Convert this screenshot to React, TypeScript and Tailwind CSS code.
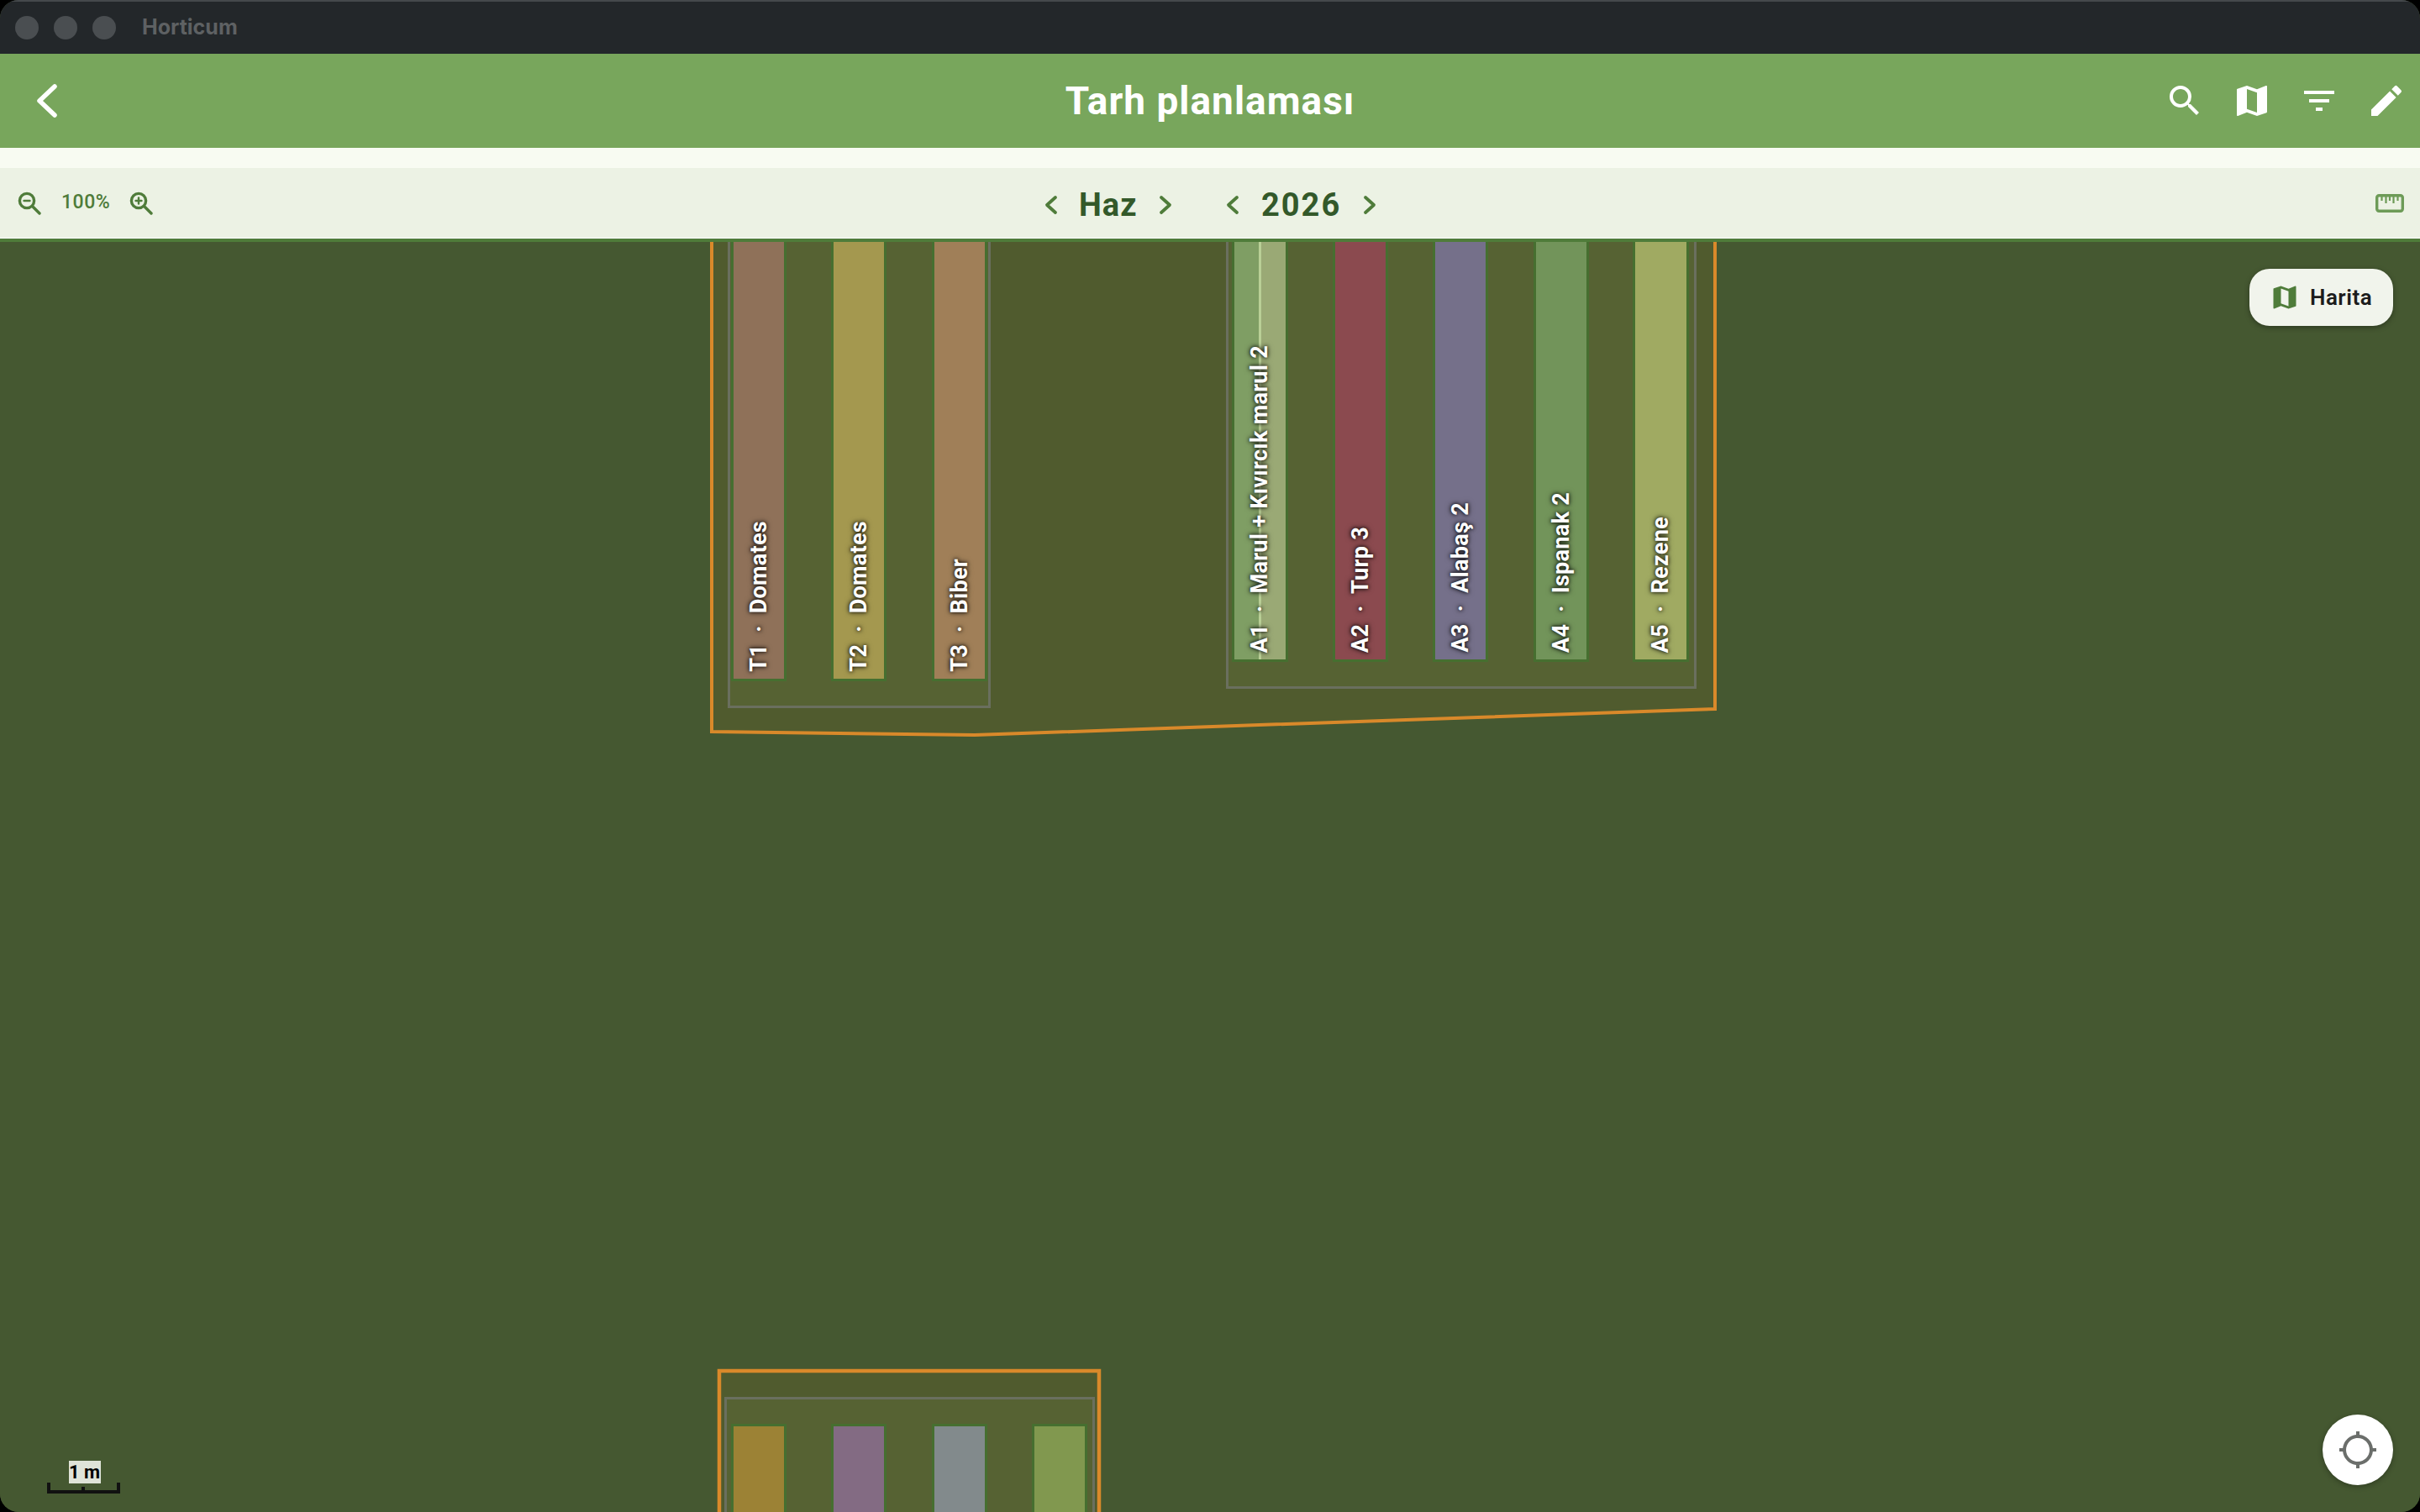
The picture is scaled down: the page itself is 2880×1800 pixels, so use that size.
import React from "react";
import { MdSearch, MdMap, MdFilterList, MdEdit, MdLocationSearching } from "react-icons/md";

const Chevron = ({ dir }: { dir: "l" | "r" }) => (
  <svg viewBox="0 0 16 24" className="w-[16px] h-[24px] text-[#4f7c3a]" fill="none" stroke="currentColor" strokeWidth="3.8" strokeLinecap="round" strokeLinejoin="round">
    <polyline points={dir === "l" ? "13,3 3,12 13,21" : "3,3 13,12 3,21"} />
  </svg>
);

const Zoom = ({ plus }: { plus?: boolean }) => (
  <svg viewBox="0 0 28 28" className="w-[28px] h-[28px] shrink-0" fill="none" stroke="currentColor" strokeWidth="3.4" strokeLinecap="round">
    <circle cx="11" cy="11" r="8.6" />
    <line x1="17.5" y1="17.5" x2="26" y2="26" />
    <line x1="7.5" y1="11" x2="14.5" y2="11" strokeWidth="2.4" />
    {plus && <line x1="11" y1="7.5" x2="11" y2="14.5" strokeWidth="2.4" />}
  </svg>
);

const Ruler = () => (
  <svg viewBox="0 0 34 22" className="w-[34px] h-[22px] text-[#6d9b57]" fill="none" stroke="currentColor">
    <rect x="1.7" y="1.7" width="30.6" height="18.6" rx="2.5" strokeWidth="3.4" />
    <path d="M7.5 3v5M12.5 3v8M17 3v5M21.5 3v8M26.5 3v5" strokeWidth="2.2" />
  </svg>
);

const topBeds = [
  { c: "left-[870px] w-[66px] h-[533px] bg-[#8f7159]", t: "T1  ·  Domates" },
  { c: "left-[989px] w-[66px] h-[533px] bg-[#a4984f]", t: "T2  ·  Domates" },
  { c: "left-[1109px] w-[66px] h-[533px] bg-[#a07f58]", t: "T3  ·  Biber" },
  { c: "left-[1466px] w-[67px] h-[510px] bg-[linear-gradient(90deg,#7f9e64_0%,#7f9e64_48%,#b9cf96_48%,#b9cf96_53%,#9aa975_53%,#9aa975_100%)]", t: "A1  ·  Marul + Kıvırcık marul 2" },
  { c: "left-[1586px] w-[66px] h-[510px] bg-[#8b4a4f]", t: "A2  ·  Turp 3" },
  { c: "left-[1705px] w-[66px] h-[510px] bg-[#75708a]", t: "A3  ·  Alabaş 2" },
  { c: "left-[1825px] w-[66px] h-[510px] bg-[#72945a]", t: "A4  ·  Ispanak 2" },
  { c: "left-[1943px] w-[67px] h-[510px] bg-[#a0aa62]", t: "A5  ·  Rezene" },
];

const bottomBeds = [
  "left-[870px] bg-[#9c8235]",
  "left-[989px] bg-[#836b83]",
  "left-[1109px] bg-[#828a8c]",
  "left-[1228px] bg-[#81984f]",
];

export default function App() {
  return (
    <div className="w-[2880px] h-[1800px] bg-black overflow-hidden font-['Roboto',sans-serif]">
      <div className="w-full h-full rounded-[22px] overflow-hidden flex flex-col bg-[#455831]">
        <div className="h-[64px] shrink-0 bg-[#23272a] border-t-2 border-[#45494c] flex items-center pl-[18px] font-['Inter',sans-serif]">
          <div className="flex gap-[18px]">
            <span className="w-[28px] h-[28px] rounded-full bg-[#4a4e51]" />
            <span className="w-[28px] h-[28px] rounded-full bg-[#4a4e51]" />
            <span className="w-[28px] h-[28px] rounded-full bg-[#4a4e51]" />
          </div>
          <span className="ml-[31px] text-[25px] font-bold text-[#5e6163]">Horticum</span>
        </div>

        <div className="h-[112px] shrink-0 bg-[#78a65c] flex items-center justify-between relative pl-[44px] pr-[16px]">
          <svg viewBox="0 0 24 40" className="w-[24px] h-[40px] text-white" fill="none" stroke="currentColor" strokeWidth="5.5" strokeLinecap="round" strokeLinejoin="round">
            <polyline points="21,3 3,20 21,37" />
          </svg>
          <span className="absolute left-0 right-0 text-center text-[46px] font-bold text-white tracking-[1px]">Tarh planlaması</span>
          <div className="flex items-center gap-[32px] text-white">
            <MdSearch size={48} />
            <MdMap size={48} />
            <MdFilterList size={48} />
            <MdEdit size={48} />
          </div>
        </div>

        <div className="h-[24px] shrink-0 bg-[#f8fbf2]" />

        <div className="h-[83px] shrink-0 bg-[#ecf2e4] flex items-center justify-between relative pl-[21px] pr-[19px]">
          <div className="flex items-center text-[#4f7c3a]">
            <Zoom />
            <span className="ml-[24px] text-[23px] font-medium tracking-[0.5px]">100%</span>
            <span className="ml-[23px]"><Zoom plus /></span>
          </div>
          <div className="absolute left-[1243px] top-[25px] flex items-center">
            <Chevron dir="l" />
            <span className="ml-[25px] w-[70px] text-[38px] font-bold text-[#33592a] tracking-[1px] leading-none">Haz</span>
            <span className="ml-[25px]"><Chevron dir="r" /></span>
            <span className="ml-[64px]"><Chevron dir="l" /></span>
            <span className="ml-[26px] w-[96px] text-[38px] font-bold text-[#33592a] tracking-[2px] leading-none">2026</span>
            <span className="ml-[25px]"><Chevron dir="r" /></span>
          </div>
          <Ruler />
        </div>

        <div className="h-[1px] shrink-0 bg-white" />
        <div className="h-[4px] shrink-0 bg-[#4f7c3a]" />

        <div className="flex-1 relative overflow-hidden bg-[#455831]">
          <svg className="absolute inset-0 w-[2880px] h-[1512px]" viewBox="0 0 2880 1512">
            <polygon points="847,-20 847,583 1160,587 2041,556 2041,-20" fill="#505b2e" stroke="#d9892a" strokeWidth="4" />
            <polygon points="856,1344 1308,1344 1308,1600 856,1600" fill="#505b2e" stroke="#d9892a" strokeWidth="4.5" />
          </svg>

          <div className="absolute left-[866px] -top-[10px] w-[313px] h-[565px] border-[3px] border-[#6a6f5e] bg-[#566233]" />
          <div className="absolute left-[1459px] -top-[10px] w-[560px] h-[542px] border-[3px] border-[#6a6f5e] bg-[#566233]" />
          <div className="absolute left-[862px] top-[1375px] w-[441px] h-[200px] border-[3px] border-[#6a6f5e] bg-[#566233]" />

          {topBeds.map((b) => (
            <div key={b.t} className={`absolute -top-[10px] border-[3px] border-[#466f30] flex flex-col items-center justify-end pb-[8px] ${b.c}`}>
              <span className="[writing-mode:vertical-rl] rotate-180 whitespace-pre text-[27px] font-bold leading-none text-white tracking-[0.3px] [text-shadow:0_0_4px_rgba(0,0,0,0.9),0_0_7px_rgba(0,0,0,0.6)]">{b.t}</span>
            </div>
          ))}

          {bottomBeds.map((c) => (
            <div key={c} className={`absolute top-[1407px] w-[66px] h-[120px] border-[3px] border-[#466f30] ${c}`} />
          ))}

          <div className="absolute right-[32px] top-[32px] w-[171px] h-[68px] rounded-[24px] bg-[#f1f4ec] shadow-[0_2px_6px_rgba(0,0,0,0.35)] flex items-center pl-[24px]">
            <MdMap size={36} className="text-[#4f7c3a]" />
            <span className="ml-[12px] text-[26px] font-semibold text-[#1c1c1c] tracking-[0.5px]">Harita</span>
          </div>

          <div className="absolute left-[56px] top-[1451px] w-[87px] h-[39px] flex flex-col items-center">
            <span className="ml-[2px] w-[38px] h-[27px] bg-[#dfe3d8] text-black text-[22px] font-bold leading-[27px] text-center whitespace-nowrap relative z-10">1 m</span>
            <div className="absolute left-0 right-0 bottom-0 h-[13px] border-x-[4px] border-b-[4px] border-[#111]" />
            <div className="absolute left-[41px] bottom-0 h-[8px] w-[4px] bg-[#111]" />
          </div>

          <div className="absolute left-[2764px] top-[1396px] w-[84px] h-[84px] rounded-full bg-white shadow-[0_2px_6px_rgba(0,0,0,0.3)] flex items-center justify-center">
            <MdLocationSearching size={48} className="text-[#6b6e6b]" />
          </div>
        </div>
      </div>
    </div>
  );
}
